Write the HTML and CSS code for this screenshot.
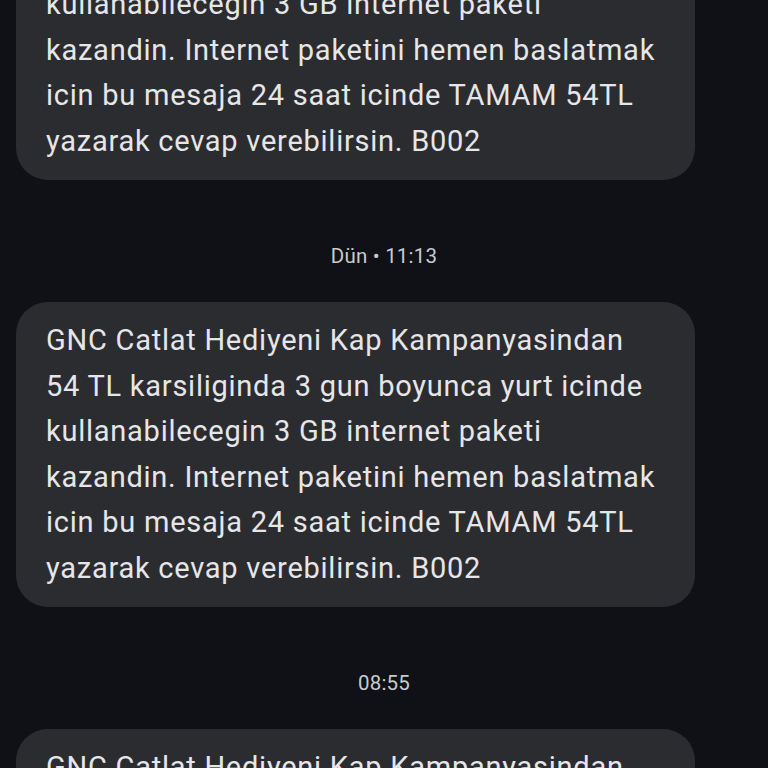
FILE: index.html
```html
<!DOCTYPE html>
<html lang="tr">
<head>
<meta charset="utf-8">
<link rel="stylesheet" href="styles.css">
</head>
<body>
<div class="thread">
  <div class="bubble first">
    <p class="msg">GNC Catlat Hediyeni Kap Kampanyasindan<br>54 TL karsiliginda 3 gun boyunca yurt icinde<br>kullanabilecegin 3 GB internet paketi<br>kazandin. Internet paketini hemen baslatmak<br>icin bu mesaja 24 saat icinde TAMAM 54TL<br>yazarak cevap verebilirsin. B002</p>
  </div>
  <div class="stamp">Dün • 11:13</div>
  <div class="bubble">
    <p class="msg">GNC Catlat Hediyeni Kap Kampanyasindan<br>54 TL karsiliginda 3 gun boyunca yurt icinde<br>kullanabilecegin 3 GB internet paketi<br>kazandin. Internet paketini hemen baslatmak<br>icin bu mesaja 24 saat icinde TAMAM 54TL<br>yazarak cevap verebilirsin. B002</p>
  </div>
  <div class="stamp">08:55</div>
  <div class="bubble">
    <p class="msg">GNC Catlat Hediyeni Kap Kampanyasindan<br>54 TL karsiliginda 3 gun boyunca yurt icinde<br>kullanabilecegin 3 GB internet paketi<br>kazandin. Internet paketini hemen baslatmak<br>icin bu mesaja 24 saat icinde TAMAM 54TL<br>yazarak cevap verebilirsin. B002</p>
  </div>
</div>
</body>
</html>
```
FILE: styles.css
```css
html, body {
  margin: 0;
  padding: 0;
  background: #0f1117;
  height: 100%;
  overflow: hidden;
}
.thread {
  display: flex;
  flex-direction: column;
  padding: 0 73px 0 16px;
  font-family: Roboto, "Noto Sans", sans-serif;
}
.bubble {
  background: #2b2c30;
  border-radius: 32px;
  padding: 16px 30px 16px 30px;
  height: 305px;
  box-sizing: border-box;
}
.bubble.first {
  margin-top: -125px;
}
.msg {
  margin: 0;
  color: #e6e6e8;
  font-size: 29px;
  letter-spacing: 0.75px;
  line-height: 45.5px;
  white-space: nowrap;
}
.stamp {
  color: #c9cace;
  font-size: 20.5px;
  letter-spacing: 0.2px;
  text-align: center;
  height: 122px;
  line-height: 152px;
  padding-left: 57px;
  box-sizing: border-box;
}
```
